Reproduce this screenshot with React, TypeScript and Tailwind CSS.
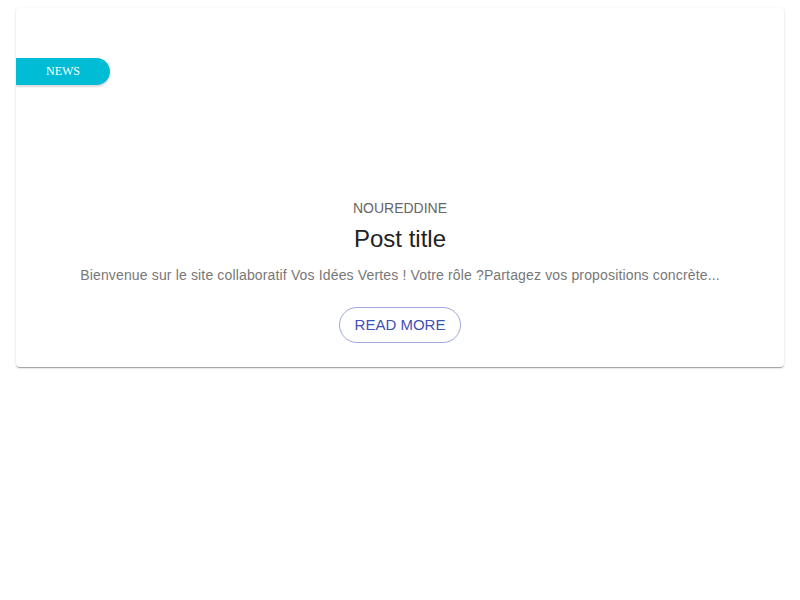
export default function App() {
	return (
		<div className="min-h-screen bg-white px-4 pt-2" style={{ fontFamily: "\"Liberation Sans\", Arial, sans-serif" }}>
			<div className="relative overflow-hidden rounded bg-white shadow-[0_2px_1px_-1px_rgba(0,0,0,0.2),0_1px_1px_0_rgba(0,0,0,0.14),0_1px_3px_0_rgba(0,0,0,0.12)]">
				<div className="relative h-[190px]">
					<span className="absolute top-[50px] left-0 flex h-[27px] w-[94px] items-center justify-center rounded-r-full bg-[#00bcd4] pb-[1px] text-[12px] text-white shadow-[0_2px_2px_rgba(0,0,0,0.15)]" style={{ fontFamily: "\"Liberation Serif\", serif" }}>
						NEWS
					</span>
				</div>
				<div className="flex flex-col items-center pb-6">
					<span className="text-[14px] leading-5 text-[#666]">NOUREDDINE</span>
					<span className="mt-[5px] text-[24px] leading-8 text-[#222]">Post title</span>
					<p className="mt-[10px] text-[14px] leading-5 tracking-[0.15px] text-[#777]">
						Bienvenue sur le site collaboratif Vos Idées Vertes ! Votre rôle ?Partagez vos propositions concrète...
					</p>
					<button className="mt-[22px] h-[36px] rounded-full border border-[#3f51b5]/50 px-[15px] text-[15px] text-[#3f51b5]">
						READ MORE
					</button>
				</div>
			</div>
		</div>
	)
}
